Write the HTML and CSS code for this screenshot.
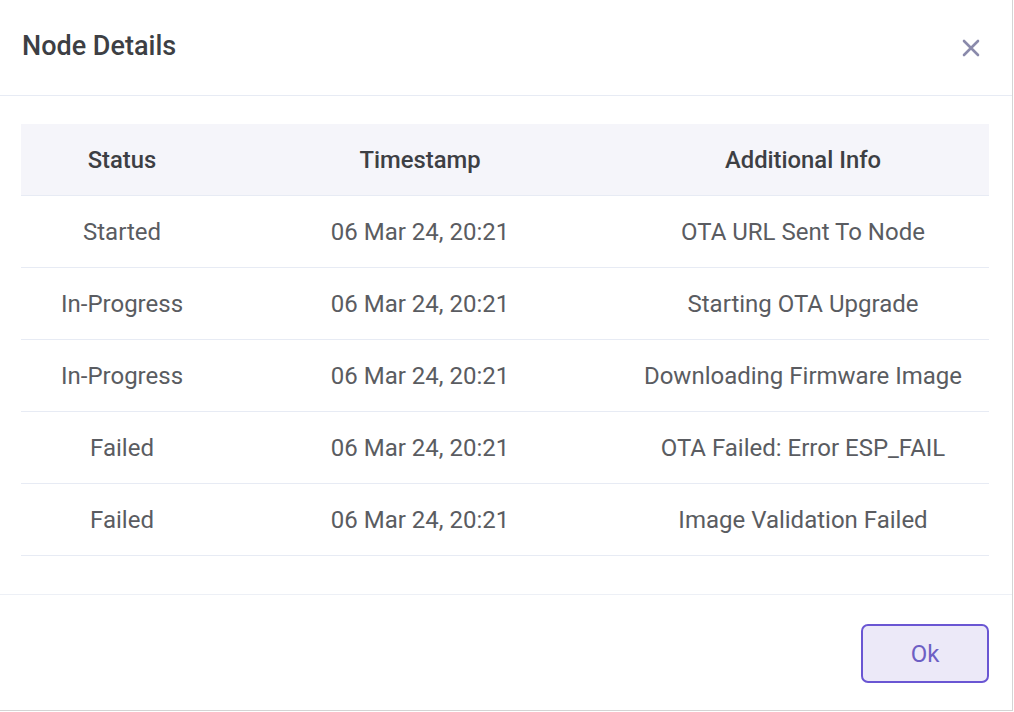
FILE: index.html
```html
<!DOCTYPE html>
<html>
  <head>
    <title>Node Details</title>
    <link rel="stylesheet" href="styles.css">
  </head>
  <body>
    <div class="dialog">
      <div class="dialog-header">
        <p class="dialog-title">Node Details</p>
        <button class="close-button" aria-label="close">
          <svg width="20" height="20" viewBox="0 0 20 20">
            <path d="M3 3 L17 17 M17 3 L3 17" stroke="#8a8aab" stroke-width="2.6" stroke-linecap="round"/>
          </svg>
        </button>
      </div>

      <div class="dialog-body">
        <table class="status-table">
          <thead>
            <tr>
              <th class="col-status">Status</th>
              <th class="col-time">Timestamp</th>
              <th class="col-info">Additional Info</th>
            </tr>
          </thead>
          <tbody>
            <tr>
              <td>Started</td>
              <td>06 Mar 24, 20:21</td>
              <td>OTA URL Sent To Node</td>
            </tr>
            <tr>
              <td>In-Progress</td>
              <td>06 Mar 24, 20:21</td>
              <td>Starting OTA Upgrade</td>
            </tr>
            <tr>
              <td>In-Progress</td>
              <td>06 Mar 24, 20:21</td>
              <td>Downloading Firmware Image</td>
            </tr>
            <tr>
              <td>Failed</td>
              <td>06 Mar 24, 20:21</td>
              <td>OTA Failed: Error ESP_FAIL</td>
            </tr>
            <tr>
              <td>Failed</td>
              <td>06 Mar 24, 20:21</td>
              <td>Image Validation Failed</td>
            </tr>
          </tbody>
        </table>
      </div>

      <div class="dialog-footer">
        <button class="ok-button">Ok</button>
      </div>
    </div>
  </body>
</html>
```

FILE: styles.css
```css
body {
    margin: 0;
    background-color: white;
    font-family: Roboto, "Liberation Sans", Arial, sans-serif;
}
.dialog {
    width: 1012px;
    height: 710px;
    border-right: 1px solid #d4d4d4;
    border-bottom: 1px solid #d4d4d4;
    display: flex;
    flex-direction: column;
}
.dialog-header {
    height: 95px;
    border-bottom: 1px solid #e7ebf4;
    display: flex;
    align-items: center;
    justify-content: space-between;
    padding: 0 31px 0 22px;
}
.dialog-title {
    margin: 0;
    font-size: 27px;
    font-weight: 500;
    color: #3d3f44;
    padding-bottom: 3px;
}
.close-button {
    background: transparent;
    border: none;
    padding: 0;
    width: 20px;
    height: 20px;
    cursor: pointer;
}
.dialog-body {
    padding: 28px 23px 38px 21px;
    border-bottom: 1px solid #edf0f6;
}
.status-table {
    width: 100%;
    border-collapse: collapse;
    table-layout: fixed;
}
.status-table th {
    background-color: #f5f5fa;
    height: 71px;
    padding: 0;
    font-size: 23.8px;
    font-weight: 500;
    color: #3d3f44;
    border-bottom: 1px solid #e7ebf4;
}
.status-table td {
    height: 71px;
    padding: 0;
    text-align: center;
    font-size: 24px;
    color: #5a5c61;
    border-bottom: 1px solid #e7ebf4;
}
.col-status {
    width: 202px;
}
.col-time {
    width: 394px;
}
.dialog-footer {
    flex: 1;
    display: flex;
    justify-content: flex-end;
    align-items: flex-start;
    padding: 29px 23px 0 0;
}
.ok-button {
    width: 128px;
    height: 59px;
    background-color: #ece9f8;
    border: 2px solid #6a56d3;
    border-radius: 7px;
    color: #6d5fc4;
    font-family: Roboto, "Liberation Sans", Arial, sans-serif;
    font-size: 24px;
    cursor: pointer;
}
```
